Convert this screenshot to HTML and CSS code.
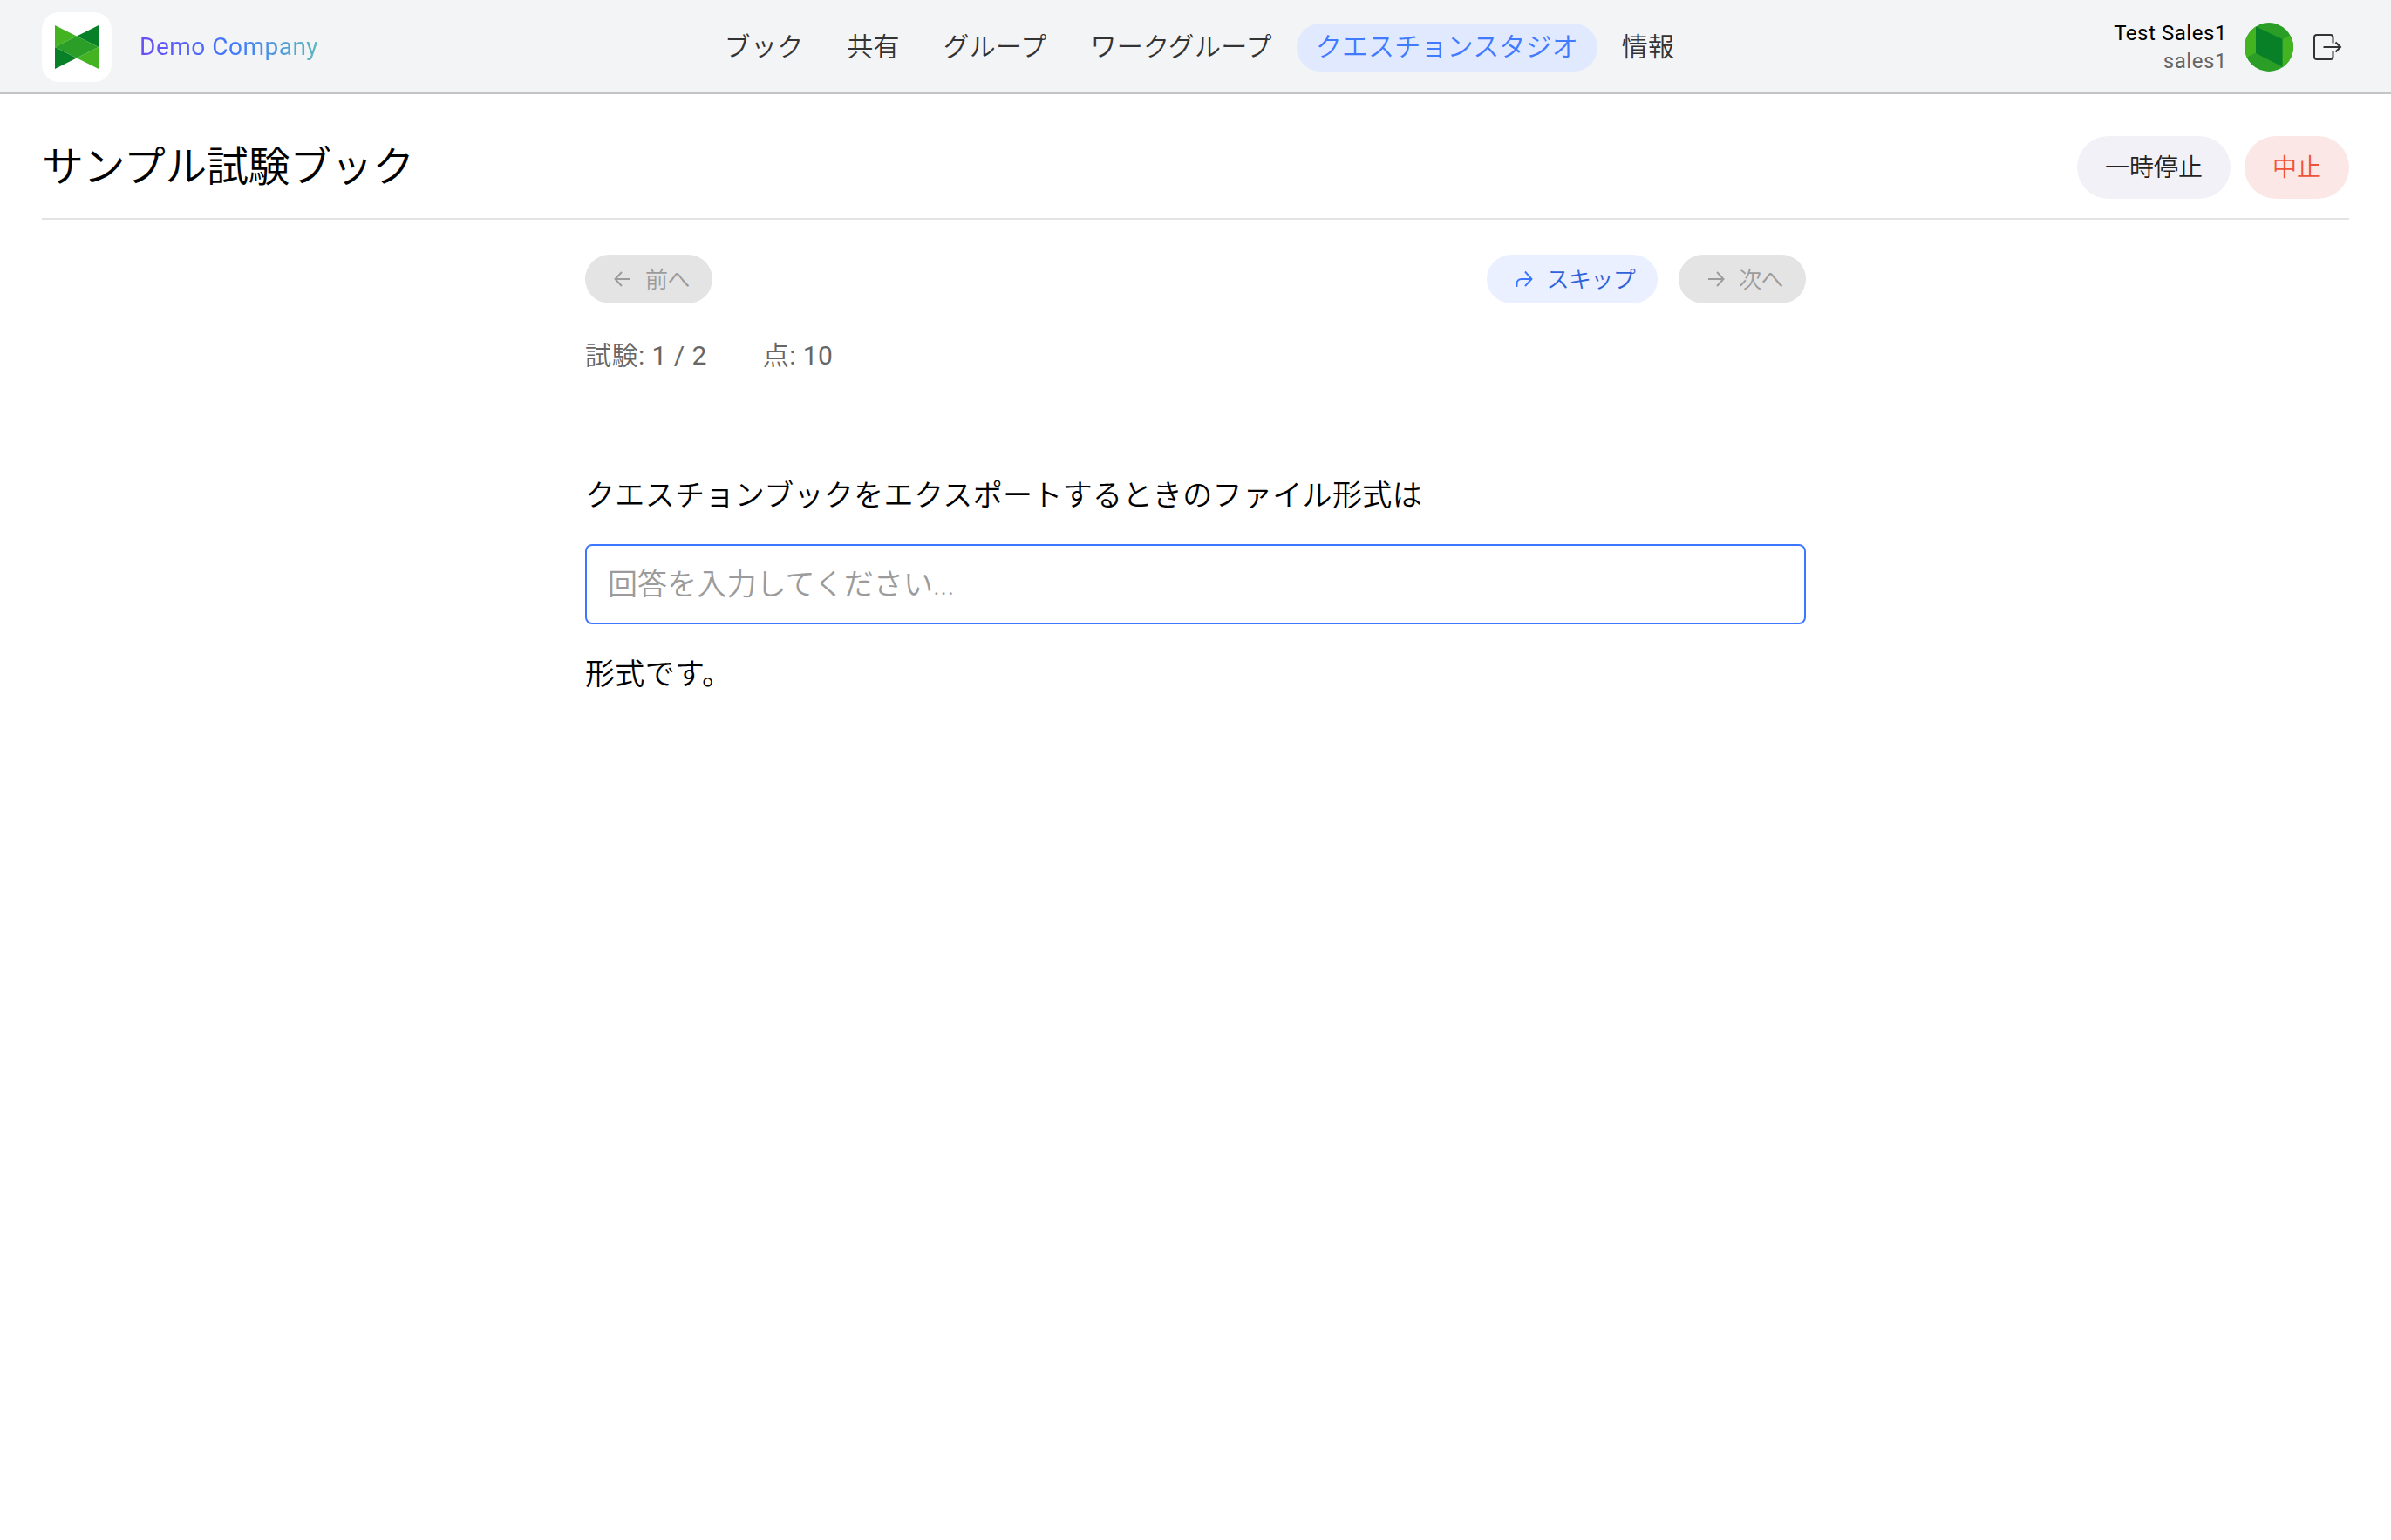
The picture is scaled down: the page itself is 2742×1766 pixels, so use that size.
FILE: index.html
```html
<!DOCTYPE html>
<html lang="ja">
<head>
    <meta charset="UTF-8">
    <meta name="viewport" content="width=device-width, initial-scale=1.0">
    <title>サンプル試験ブック</title>
    <link rel="stylesheet" href="styles.css">
</head>
<body>

    <header class="header">
        <div class="brand">
            <div class="brand-logo">
                <svg width="50" height="50" viewBox="0 0 50 50">
                    <path d="M0 0L25 12.5L0 25Z M50 50L25 37.5L50 25Z" fill="#43b322"/>
                    <path d="M50 0L25 12.5L50 25Z M0 50L25 37.5L0 25Z" fill="#078028"/>
                    <path d="M0 25L25 12.5L50 25L25 37.5Z" fill="#2a9e26"/>
                </svg>
            </div>
            <span class="brand-name">Demo Company</span>
        </div>

        <nav class="nav">
            <a class="nav-item">ブック</a>
            <a class="nav-item">共有</a>
            <a class="nav-item">グループ</a>
            <a class="nav-item">ワークグループ</a>
            <a class="nav-item active">クエスチョンスタジオ</a>
            <a class="nav-item">情報</a>
        </nav>

        <div class="user">
            <div class="user-text">
                <span class="user-name">Test Sales1</span>
                <span class="user-id">sales1</span>
            </div>
            <svg class="avatar" width="56" height="56" viewBox="0 0 56 56">
                <rect width="56" height="56" fill="#2a9e26"/>
                <path d="M0 0H13V34.500L0 41Z M56 13L43.500 19V56H56Z" fill="#43b322"/>
                <path d="M13 4.500L43.500 19V50.500L13 35Z" fill="#078028"/>
            </svg>
            <svg class="logout" width="34" height="32" viewBox="0 0 34 32" fill="none" stroke="#333" stroke-width="2">
                <path d="M23.500 11.500V5a3 3 0 0 0-3-3H5a3 3 0 0 0-3 3v22a3 3 0 0 0 3 3h15.500a3 3 0 0 0 3-3v-6.500"/>
                <path d="M12.500 16H32M26.500 10.500L32 16L26.500 21.500"/>
            </svg>
        </div>
    </header>

    <main class="page">
        <div class="title-row">
            <h1>サンプル試験ブック</h1>
            <div class="actions">
                <button class="btn btn-pause">一時停止</button>
                <button class="btn btn-stop">中止</button>
            </div>
        </div>

        <section class="exam">
            <div class="exam-nav">
                <button class="step-btn" disabled>
                    <svg width="20" height="20" viewBox="0 0 20 20" fill="none" stroke="currentColor" stroke-width="1.900"><path d="M19 10H2M9 2L1.500 10L9 18"/></svg>
                    <span>前へ</span>
                </button>
                <div class="exam-nav-right">
                    <button class="step-btn step-skip">
                        <svg width="20" height="20" viewBox="0 0 20 20" fill="none" stroke="#3b76ff" stroke-width="1.900"><path d="M1.500 19V15a5 5 0 0 1 5-5H18M11 1.500L18.500 10L11 18"/></svg>
                        <span>スキップ</span>
                    </button>
                    <button class="step-btn" disabled>
                        <svg width="20" height="20" viewBox="0 0 20 20" fill="none" stroke="currentColor" stroke-width="1.900"><path d="M1 10H18M11 2L18.500 10L11 18"/></svg>
                        <span>次へ</span>
                    </button>
                </div>
            </div>

            <div class="exam-meta">
                <div>試験<span class="num">: 1 / 2</span></div>
                <div>点<span class="num">: 10</span></div>
            </div>

            <!-- Question -->
            <div class="question">
                <p>クエスチョンブックをエクスポートするときのファイル形式は</p>
                <input class="answer" type="text" placeholder="回答を入力してください...">
                <p>形式です。</p>
            </div>
        </section>
    </main>

</body>
</html>
```
FILE: styles.css
```css
* {
    box-sizing: border-box;
}

body {
    font-family: Roboto, 'Noto Sans CJK JP', sans-serif;
    font-weight: 350;
    background-color: #fff;
    margin: 0;
    color: #000;
}

button,
input {
    font-family: inherit;
    font-weight: inherit;
}

.header {
    display: grid;
    grid-template-columns: 1fr auto 1fr;
    align-items: center;
    height: 108px;
    padding: 2px 48px 0;
    background-color: #f3f4f6;
    border-bottom: 2px solid #c4c4c6;
}

.brand {
    display: flex;
    align-items: center;
    gap: 32px;
}

.brand-logo {
    display: flex;
    align-items: center;
    justify-content: center;
    width: 80px;
    height: 80px;
    border-radius: 20px;
    background-color: #fff;
}

.brand-name {
    padding-bottom: 2px;
    font-size: 28px;
    font-weight: 400;
    letter-spacing: 0.5px;
    background: linear-gradient(90deg, #6a4cf5, #3f76ff 50%, #5cb8bd);
    -webkit-background-clip: text;
    background-clip: text;
    color: transparent;
}

.nav {
    display: flex;
    gap: 6px;
    margin-left: 9px;
}

.nav-item {
    height: 55px;
    line-height: 53px;
    padding: 0 22px;
    border-radius: 28px;
    font-size: 30px;
    letter-spacing: 0.17px;
    color: #333;
}

.nav-item.active {
    background-color: #e1e9fe;
    color: #3f7aff;
}

.user {
    display: flex;
    align-items: center;
    justify-content: flex-end;
    padding-right: 8px;
}

.user-text {
    display: flex;
    flex-direction: column;
    text-align: right;
    font-size: 24px;
    font-weight: 400;
    line-height: 32px;
    letter-spacing: 0.55px;
}

.user-id {
    color: #666;
}

.avatar {
    margin-left: 20px;
    border-radius: 50%;
}

.logout {
    margin-left: 22px;
}

.page {
    padding: 0 48px;
}

.title-row {
    display: flex;
    align-items: center;
    justify-content: space-between;
    height: 144px;
    padding-top: 26px;
    border-bottom: 2px solid #e3e3e3;
}

h1 {
    margin: 0;
    font-size: 48px;
    font-weight: inherit;
    line-height: 72px;
    letter-spacing: -0.4px;
}

.actions {
    display: flex;
    gap: 16px;
}

.btn {
    height: 72px;
    padding: 0 32px 4px;
    border: none;
    border-radius: 36px;
    font-size: 28px;
}

.btn-pause {
    background-color: #f2f1f7;
    color: #222;
}

.btn-stop {
    background-color: #fbe7e5;
    color: #f0523a;
}

.exam {
    width: 1400px;
    margin: 0 auto;
    padding-top: 40px;
}

.exam-nav {
    display: flex;
    justify-content: space-between;
}

.exam-nav-right {
    display: flex;
    gap: 24px;
}

.step-btn {
    display: flex;
    align-items: center;
    gap: 16px;
    height: 56px;
    padding: 0 26px 0 33px;
    border: none;
    border-radius: 28px;
    background-color: #e4e4e4;
    font-size: 26px;
    letter-spacing: -0.6px;
    color: #9b9b9b;
}

.step-btn span {
    padding-bottom: 4px;
}

.step-skip {
    background-color: #eaf0ff;
    color: #2f62d9;
}

.exam-meta {
    display: flex;
    gap: 64px;
    margin-top: 36px;
    font-size: 30px;
    line-height: 48px;
    letter-spacing: 0.45px;
    color: #666;
}

.num {
    font-weight: 400;
}

.question {
    margin-top: 110px;
    font-size: 34px;
    letter-spacing: 0.36px;
}

.question p {
    margin: 0;
    line-height: 52px;
}

.answer {
    display: block;
    width: 100%;
    height: 92px;
    margin: 30px 0 31px;
    padding: 0 24px;
    border: 2px solid #3d77ff;
    border-radius: 8px;
    outline: none;
    font-size: 34px;
    letter-spacing: 0.1px;
}

.answer::placeholder {
    color: #9b9b9b;
}
```
